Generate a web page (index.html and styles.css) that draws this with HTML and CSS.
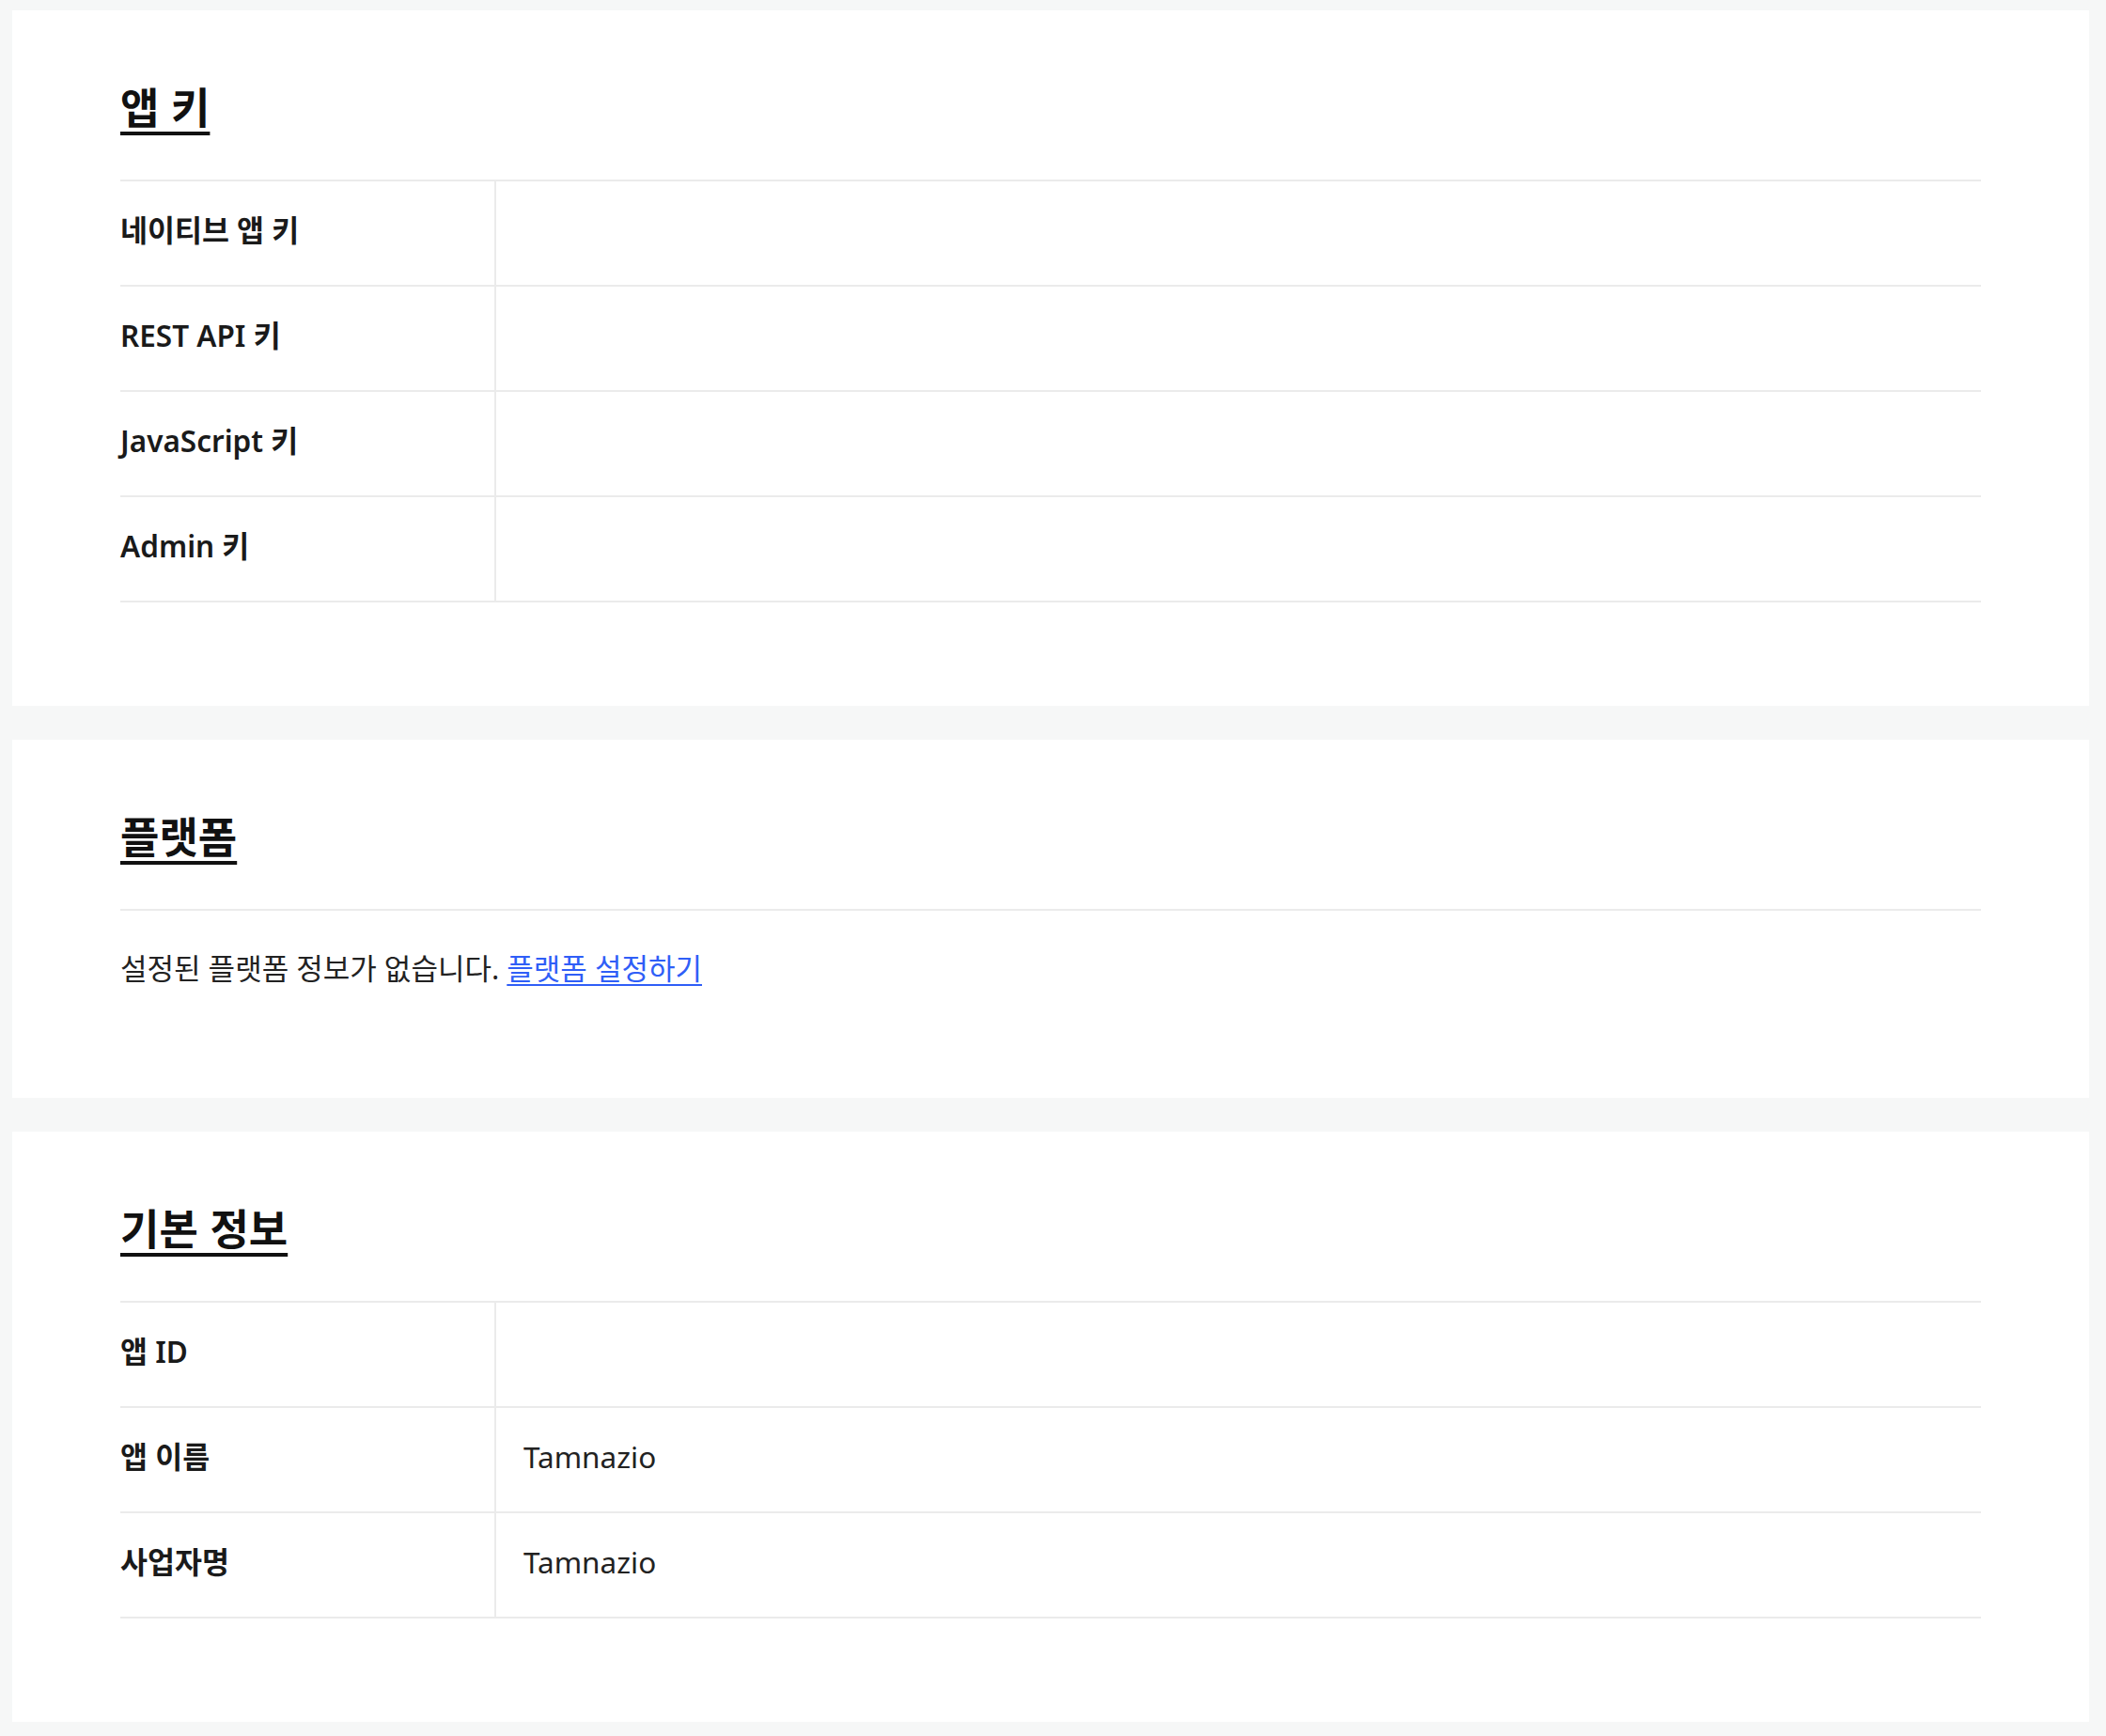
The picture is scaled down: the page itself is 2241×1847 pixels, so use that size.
FILE: index.html
```html
<!DOCTYPE html>
<html lang="ko">
<head>
    <meta charset="UTF-8">
    <meta name="viewport" content="width=device-width, initial-scale=1.0">
    <title>앱 설정 - 요약 정보</title>
    <link rel="stylesheet" href="styles.css">
</head>
<body>
    <div class="page">
        <!-- 앱 키 -->
        <section class="card">
            <h2 class="card-title">앱 키</h2>
            <div class="info-table">
                <div class="info-row">
                    <div class="info-label">네이티브 앱 키</div>
                    <div class="info-value"></div>
                </div>
                <div class="info-row">
                    <div class="info-label">REST API 키</div>
                    <div class="info-value"></div>
                </div>
                <div class="info-row">
                    <div class="info-label">JavaScript 키</div>
                    <div class="info-value"></div>
                </div>
                <div class="info-row">
                    <div class="info-label">Admin 키</div>
                    <div class="info-value"></div>
                </div>
            </div>
        </section>

        <!-- 플랫폼 -->
        <section class="card">
            <h2 class="card-title">플랫폼</h2>
            <div class="card-body">
                <p class="empty-text">설정된 플랫폼 정보가 없습니다. <a href="#" class="text-link">플랫폼 설정하기</a></p>
            </div>
        </section>

        <!-- 기본 정보 -->
        <section class="card">
            <h2 class="card-title">기본 정보</h2>
            <div class="info-table">
                <div class="info-row">
                    <div class="info-label">앱 ID</div>
                    <div class="info-value"></div>
                </div>
                <div class="info-row">
                    <div class="info-label">앱 이름</div>
                    <div class="info-value">Tamnazio</div>
                </div>
                <div class="info-row">
                    <div class="info-label">사업자명</div>
                    <div class="info-value">Tamnazio</div>
                </div>
            </div>
        </section>
    </div>
</body>
</html>
```

FILE: styles.css
```css
* {
    box-sizing: border-box;
}

body {
    margin: 0;
    padding: 0;
    background-color: #f6f7f7;
    font-family: "Noto Sans", "Noto Sans CJK KR", sans-serif;
    color: #222;
}

.page {
    display: flex;
    flex-direction: column;
    gap: 36px;
    padding: 11px 18px 14px 13px;
}

.card {
    background-color: #fff;
    padding: 72px 115px 110px;
}

.card-title {
    margin: 0 0 48px;
    font-family: "Noto Sans CJK KR", sans-serif;
    font-size: 45px;
    font-weight: 700;
    line-height: 60px;
    color: #111;
    text-decoration: underline;
    text-decoration-thickness: 4px;
    text-underline-offset: 8px;
}

/* 키 / 값 표 */
.info-table {
    border-top: 2px solid #ebebeb;
}

.info-row {
    display: grid;
    grid-template-columns: 400px 1fr;
    height: 112px;
    border-bottom: 2px solid #ebebeb;
}

.info-label,
.info-value {
    display: flex;
    align-items: center;
    padding-bottom: 7px;
    font-size: 31.5px;
    line-height: 43px;
}

.info-label {
    font-weight: 600;
    color: #1a1a1a;
    border-right: 2px solid #ebebeb;
}

.info-value {
    padding-left: 29px;
    color: #222;
}

/* 플랫폼 */
.card-body {
    border-top: 2px solid #ebebeb;
}

.empty-text {
    margin: 40px 0 6px;
    font-size: 31px;
    line-height: 43px;
    color: #222;
}

.text-link {
    color: #2f5ef7;
    text-decoration: underline;
    text-decoration-thickness: 2px;
    text-underline-offset: 5px;
}
```
